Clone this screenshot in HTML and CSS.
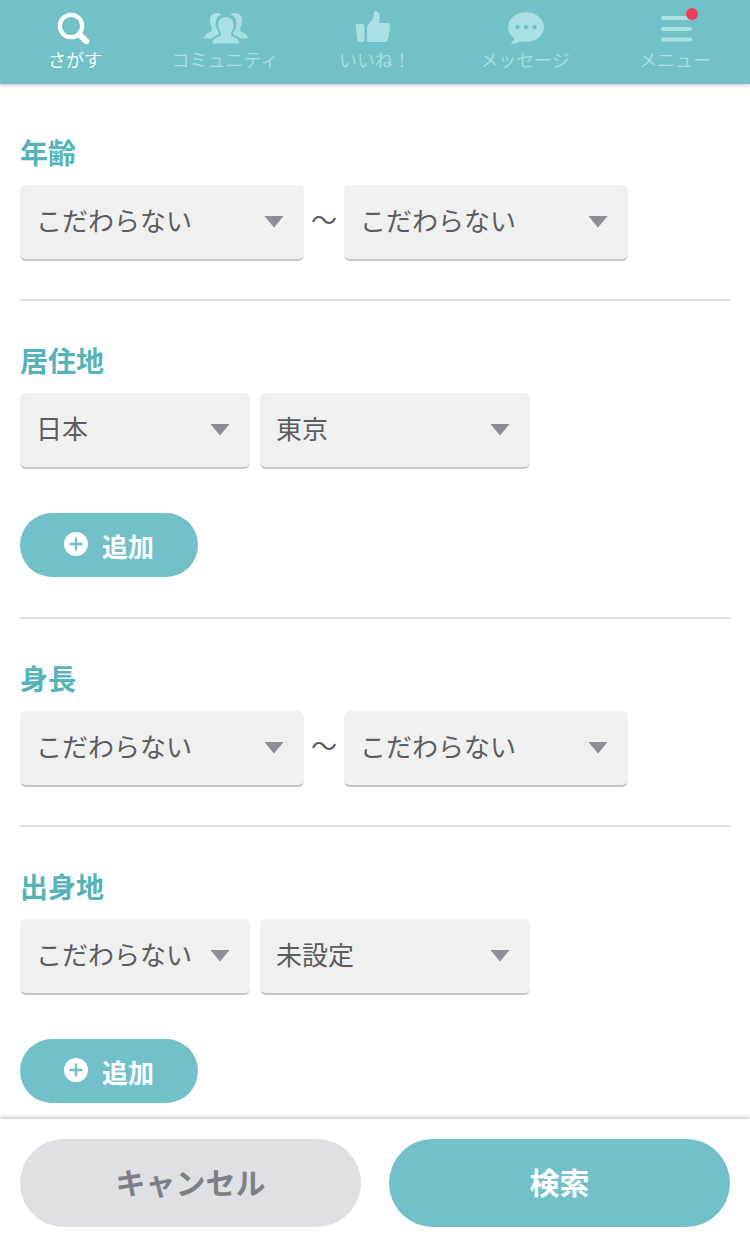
FILE: index.html
```html
<!DOCTYPE html>
<html lang="ja">
<head>
<meta charset="utf-8">
<title>さがす</title>
<link rel="stylesheet" href="styles.css">
</head>
<body>
<div class="app">
  <nav class="nav">
    <a class="nav-item active">
      <svg class="nav-icon" viewBox="0 0 40 40"><circle cx="16" cy="22" r="11.2" fill="none" stroke="currentColor" stroke-width="4.2"/><path d="M24.5 30.5L31.3 37.3" stroke="currentColor" stroke-width="6" stroke-linecap="round"/></svg>
      <span>さがす</span>
    </a>
    <a class="nav-item">
      <svg class="nav-icon wide" viewBox="0 0 50 40"><g fill="currentColor"><path d="M17 9C11 9 9.500 13 10 18C10.300 21 12 23.500 12 26C12 28.500 4 28.500 4 34.500H12C14 31.500 19 31.500 19 29C16 25 15 21 16 16C17 13 19 11.500 21.500 11C20.500 9.500 19 9 17 9Z"/><path d="M35 9C41 9 42.500 13 42 18C41.700 21 40 23.500 40 26C40 28.500 48 28.500 48 34.500H40C38 31.500 33 31.500 33 29C36 25 37 21 36 16C35 13 33 11.500 30.500 11C31.500 9.500 33 9 35 9Z"/><path d="M26 13C20.500 13 18 17 18.300 21.500C18.500 25 21 27.500 21 30C21 33.500 12.500 32.500 12.500 39.500H39.500C39.500 32.500 31 33.500 31 30C31 27.500 33.500 25 33.700 21.500C34 17 31.500 13 26 13Z"/></g></svg>
      <span>コミュニティ</span>
    </a>
    <a class="nav-item">
      <svg class="nav-icon" viewBox="0 0 40 40"><path fill="currentColor" d="M1.500 20H8Q9.500 20 9.500 21.500V36.500Q9.500 38 8 38H4Q2.600 38 2.400 36.500L0.700 21.500Q0.700 20 1.500 20ZM12 23C12.500 19.500 19 17.500 18.700 10C18.600 7.800 19.500 7 21 7C25 7.500 25.800 14 23.800 19H33C35.800 19 35.800 22.800 34 23.800C35.500 25.200 35.300 28 33.700 28.700C34.700 30.300 34.300 32.700 32.700 33.400C33.500 36 32 38 29.500 38H13.500Q12 38 12 36.500Z"/></svg>
      <span>いいね！</span>
    </a>
    <a class="nav-item">
      <svg class="nav-icon" viewBox="0 0 40 40"><ellipse cx="21" cy="23" rx="18" ry="14.700" fill="currentColor"/><path fill="currentColor" d="M10 31C10 35 8 38 5.500 40C10 40 14 38.500 18 35.500Z"/><g class="dots"><circle cx="12.500" cy="23" r="2.200"/><circle cx="21" cy="23" r="2.200"/><circle cx="29.500" cy="23" r="2.200"/></g></svg>
      <span>メッセージ</span>
    </a>
    <a class="nav-item">
      <svg class="nav-icon" viewBox="0 0 40 40"><path d="M8 14H35M8 25H35M8 35.500H35" stroke="currentColor" stroke-width="4.200" stroke-linecap="round"/></svg>
      <span>メニュー</span>
      <i class="badge"></i>
    </a>
  </nav>

  <main class="form">
    <section class="field">
      <h2>年齢</h2>
      <div class="row">
        <div class="select range">こだわらない</div><span class="tilde">〜</span><div class="select range">こだわらない</div>
      </div>
    </section>
    <section class="field">
      <h2>居住地</h2>
      <div class="row place">
        <div class="select country">日本</div><div class="select region">東京</div>
      </div>
      <button class="add"><svg viewBox="0 0 24 24"><circle cx="12" cy="12" r="12" fill="#fff"/><path class="plus" d="M12 5.500V18.500M5.500 12H18.500"/></svg>追加</button>
    </section>
    <section class="field">
      <h2>身長</h2>
      <div class="row">
        <div class="select range">こだわらない</div><span class="tilde">〜</span><div class="select range">こだわらない</div>
      </div>
    </section>
    <section class="field">
      <h2>出身地</h2>
      <div class="row place">
        <div class="select country">こだわらない</div><div class="select region">未設定</div>
      </div>
      <button class="add"><svg viewBox="0 0 24 24"><circle cx="12" cy="12" r="12" fill="#fff"/><path class="plus" d="M12 5.500V18.500M5.500 12H18.500"/></svg>追加</button>
    </section>
  </main>

  <footer class="actions">
    <button class="cancel">キャンセル</button>
    <button class="search">検索</button>
  </footer>
</div>
</body>
</html>
```
FILE: styles.css
```css
* { box-sizing: border-box; }
body {
  margin: 0;
  background: #fff;
  color: #5c5c60;
  font-family: "Noto Sans CJK JP", sans-serif;
}
.app { height: 1251px; display: flex; flex-direction: column; overflow: hidden; }

.nav {
  flex: none;
  height: 84px;
  display: grid;
  grid-template-columns: repeat(5, 1fr);
  background: #72c1c8;
  box-shadow: 0 1px 4px rgba(0, 0, 0, .25);
}
.nav-item {
  position: relative;
  display: flex;
  flex-direction: column;
  align-items: center;
  padding-top: 4px;
  color: #a9e0e4;
  font-size: 18px;
  line-height: 30px;
  font-weight: 350;
  white-space: nowrap;
}
.nav-item.active { color: #fff; }
.nav-icon { width: 40px; height: 40px; }
.nav-icon.wide { width: 50px; }
.dots { fill: #72c1c8; }
.badge {
  position: absolute;
  left: 86px;
  top: 8px;
  width: 12px;
  height: 12px;
  border-radius: 50%;
  background: #f13e57;
}

.form { flex: 1; min-height: 0; padding: 9px 20px 0; }
.field { padding: 40px 0 38px; border-bottom: 2px solid #dfdfe1; }
.field:has(.add) { padding-bottom: 40px; }
.field:last-child { border-bottom: 0; }
h2 {
  margin: 0 0 10px;
  height: 42px;
  font-size: 28px;
  line-height: 38px;
  font-weight: 700;
  color: #56b4b8;
}
.row { display: flex; align-items: center; }
.place { gap: 10px; }
.select {
  height: 76px;
  padding: 0 20px 5px 16px;
  display: flex;
  align-items: center;
  justify-content: space-between;
  border-radius: 6px;
  border-bottom: 2px solid #c6c6c8;
  background: #f0f0f0;
  font-size: 26px;
  line-height: 38px;
  font-weight: 400;
  white-space: nowrap;
}
.select::after {
  content: "";
  width: 20px;
  height: 12px;
  margin-top: 4px;
  background: #8c8d96;
  clip-path: polygon(0 0, 100% 0, 50% 100%);
}
.range { width: 284px; }
.country { width: 230px; }
.region { width: 270px; }
.tilde { width: 40px; padding-bottom: 8px; text-align: center; font-size: 26px; line-height: 38px; }

button { border: 0; font-family: inherit; font-weight: 700; color: #fff; background: #72c1c8; }
.add {
  margin-top: 44px;
  width: 178px;
  height: 64px;
  padding: 1px 0 0;
  display: flex;
  align-items: center;
  justify-content: center;
  gap: 14px;
  border-radius: 32px;
  font-size: 26px;
  line-height: 38px;
}
.add svg { width: 24px; height: 24px; margin-top: -3px; }
.plus { stroke: #72c1c8; stroke-width: 2.4; }

.actions {
  flex: none;
  height: 132px;
  position: relative;
  padding: 20px 20px 24px;
  display: grid;
  grid-template-columns: 1fr 1fr;
  gap: 28px;
  background: #fff;
  box-shadow: 0 -1px 5px rgba(0, 0, 0, .28);
}
.actions button { height: 88px; border-radius: 44px; font-size: 30px; line-height: 44px; padding: 0 0 4px; }
.actions .cancel { background: #dfe0e3; color: #7d7f88; }
```
